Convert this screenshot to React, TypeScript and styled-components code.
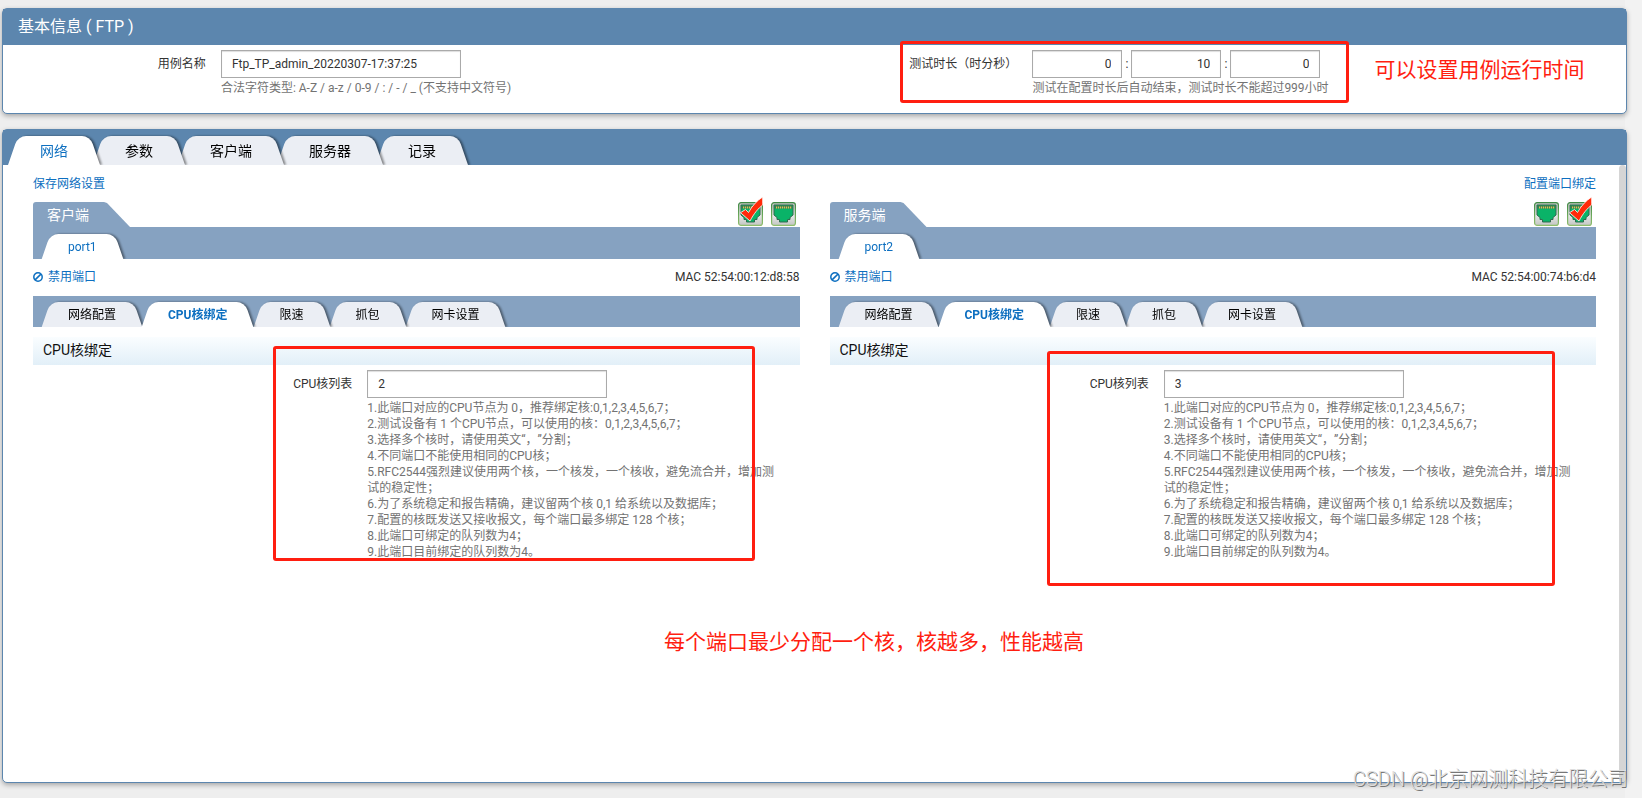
import React, { useState } from "react";
import styled, { createGlobalStyle } from "styled-components";

const blue = "#5c86ae";
const softBlue = "#86a2c1";
const link = "#0d6fc0";
const red = "#ff1e10";

const GlobalStyle = createGlobalStyle`
  *, *::before, *::after { box-sizing: border-box; }
  body {
    margin: 0;
    font-family: Roboto, "Noto Sans CJK SC", sans-serif;
    font-size: 12px;
    line-height: 16px;
    color: #333;
    text-spacing-trim: space-all;
  }
  button, input { font: inherit; color: inherit; }
`;

const Page = styled.div`
  position: relative;
  display: flex;
  flex-direction: column;
  gap: 15px;
  min-height: 100vh;
  padding: 8px 15px 15px 2px;
  background: linear-gradient(to left, #f2f2f2 17px, #eee 17px);
`;

const Panel = styled.section<{ $grow?: boolean }>`
  display: flex;
  flex-direction: column;
  flex: ${(p) => (p.$grow ? "1" : "none")};
  border: 1px solid ${blue};
  border-radius: 5px;
  background: #fff;
  box-shadow: 0 2px 5px rgba(0, 0, 0, 0.3);
`;

const PanelTitle = styled.h1`
  margin: 0;
  padding: 0 15px;
  background: ${blue};
  color: #fff;
  font-size: 16px;
  font-weight: 400;
  line-height: 36px;
`;

const InfoForm = styled.form`
  display: grid;
  grid-template-columns: 1fr 1fr;
  padding: 5px 0 17px;
`;

const Field = styled.div<{ $label: string }>`
  position: relative;
  display: grid;
  grid-template-columns: ${(p) => p.$label} 1fr;
`;

const Label = styled.label`
  line-height: 28px;
  text-align: right;
`;

const FieldBody = styled.div`
  padding: 0 15px;
`;

const TextInput = styled.input<{ $short?: boolean }>`
  display: block;
  width: ${(p) => (p.$short ? "90px" : "240px")};
  height: 28px;
  padding: 0 10px;
  border: 1px solid #aaa;
  border-radius: 0;
  background: #fff;
  box-shadow: inset 0 1px 1px #ddd;
  text-align: ${(p) => (p.$short ? "right" : "left")};
`;

const TimeRow = styled.div`
  display: flex;
  align-items: center;
`;

const Colon = styled.span`
  width: 9px;
  text-align: center;
`;

const Hint = styled.p`
  margin: 2px 0 0;
  color: #737373;
`;

const HintList = styled(Hint).attrs({ as: "div" })``;

const HintLine = styled.div``;

const TabBar = styled.div<{ $height: number; $color: string; $left: number }>`
  position: relative;
  z-index: 0;
  display: flex;
  align-items: flex-end;
  height: ${(p) => p.$height}px;
  padding-left: ${(p) => p.$left}px;
  overflow: hidden;
  background: ${(p) => p.$color};
`;

const Tab = styled.button<{
  $active: boolean;
  $order: number;
  $large?: boolean;
  $bold?: boolean;
}>`
  position: relative;
  z-index: ${(p) => (p.$active ? 20 : 10 - p.$order)};
  height: ${(p) => (p.$large ? 29 : 25)}px;
  margin-right: ${(p) => (p.$large ? -7 : -2)}px;
  padding: 0 ${(p) => (p.$large ? 32 : 27)}px;
  border: 0;
  background: none;
  color: ${(p) => (p.$active ? link : "#000")};
  font-size: ${(p) => (p.$large ? 14 : 12)}px;
  font-weight: ${(p) => (p.$active && p.$bold ? 700 : 400)};
  filter: drop-shadow(2px 0 1px rgba(0, 0, 0, 0.45));
  cursor: pointer;

  &::before,
  &::after {
    content: "";
    position: absolute;
    z-index: -1;
    top: 0;
    bottom: 0;
    background: ${(p) => (p.$active ? "#fff" : "#ebeef4")};
  }
  &::before {
    left: 5px;
    right: 30%;
    border-top-left-radius: 8px;
    transform: skewX(-19deg);
  }
  &::after {
    left: 30%;
    right: 5px;
    border-top-right-radius: 8px;
    transform: skewX(19deg);
  }
`;

const Scroller = styled.div`
  display: flex;
  flex: 1;
`;

const ScrollThumb = styled.div`
  width: 7px;
  border-radius: 4px;
  background: #d5d5d5;
`;

const Network = styled.div`
  position: relative;
  flex: 1;
  padding: 11px 23px 20px 30px;
`;

const LinkRow = styled.div`
  display: flex;
  justify-content: space-between;
  margin-bottom: 10px;
`;

const Link = styled.a`
  display: inline-flex;
  align-items: center;
  gap: 5px;
  color: ${link};
  text-decoration: none;
`;

const Sides = styled.div`
  display: grid;
  grid-template-columns: 1fr 1fr;
  gap: 30px;
`;

const Side = styled.section`
  min-width: 0;
`;

const SideHead = styled.header`
  display: flex;
  justify-content: space-between;
  height: 25px;
`;

const SideTitle = styled.h2`
  margin: 0;
  padding: 0 41px 0 14px;
  border-top-left-radius: 3px;
  background: ${softBlue};
  clip-path: polygon(0 0, calc(100% - 26px) 0, calc(100% - 23px) 1px, 100% 100%, 0 100%);
  color: #fff;
  font-size: 14px;
  font-weight: 400;
  line-height: 26px;
`;

const Jacks = styled.div`
  display: flex;
  gap: 8px;
  padding-right: 4px;
`;

const JackButton = styled.button`
  width: 25px;
  height: 24px;
  padding: 0;
  border: 0;
  background: none;
  cursor: pointer;

  svg {
    display: block;
    overflow: visible;
  }
`;

const PortRow = styled.div`
  display: flex;
  align-items: center;
  justify-content: space-between;
  height: 37px;
  padding-bottom: 2px;
`;

const SectionTitle = styled.h3`
  margin: 10px 0 5px;
  padding: 0 10px 2px;
  background: linear-gradient(#fafdff, #e2eff8);
  color: #111;
  font-size: 14px;
  font-weight: 400;
  line-height: 26px;
`;

/* Red marker frame laid over a form field. */
const Frame = styled.div<{ $top: number; $left: number; $w: number; $h: number }>`
  position: absolute;
  z-index: 30;
  top: ${(p) => p.$top}px;
  left: ${(p) => p.$left}px;
  width: ${(p) => p.$w}px;
  height: ${(p) => p.$h}px;
  border: 3px solid ${red};
  border-radius: 3px;
  pointer-events: none;
`;

const Note = styled.p<{ $top: number; $left: number }>`
  position: absolute;
  z-index: 30;
  top: ${(p) => p.$top}px;
  left: ${(p) => p.$left}px;
  margin: 0;
  color: ${red};
  font-size: 21px;
  line-height: 30px;
  white-space: nowrap;
`;

const Watermark = styled.div`
  position: absolute;
  z-index: 40;
  right: 14px;
  bottom: 5px;
  color: #dedede;
  font-size: 20px;
  font-weight: 300;
  line-height: 28px;
  text-shadow: 1px 1px 0 #777;
  white-space: nowrap;
`;

function BanIcon() {
  return (
    <svg width="10" height="10" viewBox="0 0 10 10" fill="none" stroke={link} strokeWidth="1.5" aria-hidden="true">
      <circle cx="5" cy="5" r="4.2" />
      <path d="M2.1 7.9 7.9 2.1" />
    </svg>
  );
}

function JackIcon({ checked }: { checked: boolean }) {
  return (
    <svg width="25" height="24" viewBox="0 0 25 24" aria-hidden="true">
      <defs>
        <linearGradient id="jack-case" x1="0" y1="0" x2="0" y2="1">
          <stop offset="0" stopColor="#b9bfb9" />
          <stop offset="0.6" stopColor="#e2e4e2" />
          <stop offset="1" stopColor="#c4c6c4" />
        </linearGradient>
        <linearGradient id="jack-edge" x1="0" y1="0" x2="0" y2="1">
          <stop offset="0" stopColor="#3f8a45" />
          <stop offset="1" stopColor="#8fbf6c" />
        </linearGradient>
      </defs>
      <rect x="0.6" y="0.6" width="23.8" height="22.8" rx="2.5" fill="url(#jack-case)" stroke="url(#jack-edge)" strokeWidth="1.2" />
      <path
        d="M3 3H22V13L19 15.500V17.500H16.500V20H8.500V17.500H6V15.500L3 13Z"
        fill="#0ab368"
        stroke="#2f6b4e"
        strokeWidth="1"
      />
      <path d="M3.500 3.500H21.500V6.500H3.500Z" fill="#3c7a4c" />
      <path d="M5 5.500H20.500" stroke="#d8c25a" strokeWidth="2" strokeDasharray="1.2 0.8" />
      {checked && (
        <path
          d="M2.500 10.700 7.500 7.500 10.500 10.500C14 4 19 -1.500 24.700 -5V3C20 6.500 16 11.500 12 19Z"
          fill="#ff2a0a"
          stroke="#fff"
          strokeWidth="0.8"
        />
      )}
    </svg>
  );
}

interface TabsProps {
  names: string[];
  initial: number;
  height: number;
  color: string;
  left: number;
  large?: boolean;
  bold?: boolean;
}

function Tabs({ names, initial, height, color, left, large, bold }: TabsProps) {
  const [current, setCurrent] = useState(initial);
  return (
    <TabBar role="tablist" $height={height} $color={color} $left={left}>
      {names.map((name, i) => (
        <Tab
          key={name}
          type="button"
          role="tab"
          aria-selected={i === current}
          $active={i === current}
          $order={i}
          $large={large}
          $bold={bold}
          onClick={() => setCurrent(i)}
        >
          {name}
        </Tab>
      ))}
    </TabBar>
  );
}

const coreHints = [
  "1.此端口对应的CPU节点为 0，推荐绑定核:0,1,2,3,4,5,6,7；",
  "2.测试设备有 1 个CPU节点，可以使用的核：0,1,2,3,4,5,6,7；",
  "3.选择多个核时，请使用英文“，”分割；",
  "4.不同端口不能使用相同的CPU核；",
  "5.RFC2544强烈建议使用两个核，一个核发，一个核收，避免流合并，增加测试的稳定性；",
  "6.为了系统稳定和报告精确，建议留两个核 0,1 给系统以及数据库；",
  "7.配置的核既发送又接收报文，每个端口最多绑定 128 个核；",
  "8.此端口可绑定的队列数为4；",
  "9.此端口目前绑定的队列数为4。",
];

interface SidePanelProps {
  title: string;
  port: string;
  mac: string;
  cores: string;
  jacks: boolean[];
  frame: React.ReactNode;
}

function SidePanel({ title, port, mac, cores, jacks, frame }: SidePanelProps) {
  const id = `cores-${port}`;
  return (
    <Side>
      <SideHead>
        <SideTitle>{title}</SideTitle>
        <Jacks>
          {jacks.map((checked, i) => (
            <JackButton key={i} type="button" aria-label={`端口 ${i + 1}`} aria-pressed={checked}>
              <JackIcon checked={checked} />
            </JackButton>
          ))}
        </Jacks>
      </SideHead>
      <Tabs names={[port]} initial={0} height={32} color={softBlue} left={8} />
      <PortRow>
        <Link href="#disable">
          <BanIcon />
          禁用端口
        </Link>
        <span>MAC {mac}</span>
      </PortRow>
      <Tabs
        names={["网络配置", "CPU核绑定", "限速", "抓包", "网卡设置"]}
        initial={1}
        height={31}
        color={softBlue}
        left={8}
        bold
      />
      <SectionTitle>CPU核绑定</SectionTitle>
      <Field $label="41.66%">
        <Label htmlFor={id}>CPU核列表</Label>
        <FieldBody>
          <TextInput id={id} defaultValue={cores} />
          <HintList>
            {coreHints.map((line) => (
              <HintLine key={line}>{line}</HintLine>
            ))}
          </HintList>
        </FieldBody>
        {frame}
      </Field>
    </Side>
  );
}

export default function App() {
  return (
    <Page>
      <GlobalStyle />
      <Panel>
        <PanelTitle>基本信息 ( FTP )</PanelTitle>
        <InfoForm>
          <Field $label="25%">
            <Label htmlFor="case-name">用例名称</Label>
            <FieldBody>
              <TextInput id="case-name" defaultValue="Ftp_TP_admin_20220307-17:37:25" />
              <Hint>合法字符类型: A-Z / a-z / 0-9 / : / - / _ (不支持中文符号)</Hint>
            </FieldBody>
          </Field>
          <Field $label="25%">
            <Label htmlFor="hours">测试时长（时分秒）</Label>
            <FieldBody>
              <TimeRow>
                <TextInput id="hours" $short inputMode="numeric" defaultValue="0" />
                <Colon>:</Colon>
                <TextInput aria-label="分" $short inputMode="numeric" defaultValue="10" />
                <Colon>:</Colon>
                <TextInput aria-label="秒" $short inputMode="numeric" defaultValue="0" />
              </TimeRow>
              <Hint>测试在配置时长后自动结束，测试时长不能超过999小时</Hint>
            </FieldBody>
            <Frame $top={-9} $left={85} $w={449} $h={62} />
            <Note $top={5} $left={560}>可以设置用例运行时间</Note>
          </Field>
        </InfoForm>
      </Panel>

      <Panel $grow>
        <Tabs
          names={["网络", "参数", "客户端", "服务器", "记录"]}
          initial={0}
          height={35}
          color={blue}
          left={5}
          large
        />
        <Scroller>
          <Network>
            <LinkRow>
              <Link href="#save">保存网络设置</Link>
              <Link href="#bind">配置端口绑定</Link>
            </LinkRow>
            <Sides>
              <SidePanel
                title="客户端"
                port="port1"
                mac="52:54:00:12:d8:58"
                cores="2"
                jacks={[true, false]}
                frame={<Frame $top={-24} $left={240} $w={482} $h={215} />}
              />
              <SidePanel
                title="服务端"
                port="port2"
                mac="52:54:00:74:b6:d4"
                cores="3"
                jacks={[false, true]}
                frame={<Frame $top={-19} $left={217} $w={508} $h={235} />}
              />
            </Sides>
            <Note $top={462} $left={661}>每个端口最少分配一个核，核越多，性能越高</Note>
          </Network>
          <ScrollThumb />
        </Scroller>
      </Panel>
      <Watermark>CSDN @北京网测科技有限公司</Watermark>
    </Page>
  );
}
